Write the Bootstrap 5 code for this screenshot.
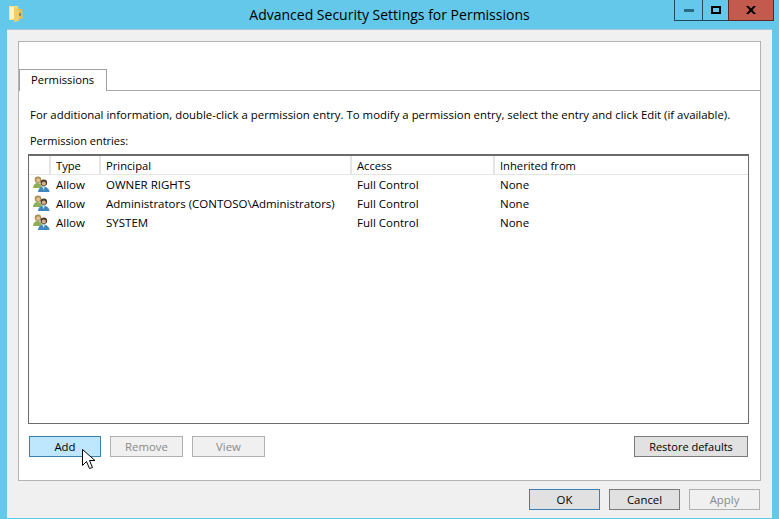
<!DOCTYPE html>
<html lang="en"><head><meta charset="utf-8"><title>Advanced Security Settings for Permissions</title>
<link href="https://cdn.jsdelivr.net/npm/bootstrap@5.3.0/dist/css/bootstrap.min.css" rel="stylesheet">
<style>
html,body{margin:0;height:519px;overflow:hidden}
body{background:#63c8ea;font-family:"Open Sans","Noto Sans","Liberation Sans",sans-serif;font-size:11.4px;color:#000;line-height:16px}
.win{width:779px;height:519px;position:relative;display:flex;flex-direction:column}
.cap{height:30px;display:grid;grid-template-columns:1fr auto 1fr;padding-left:5px;padding-right:5px}
.ttl{font-size:14px;line-height:20px;padding-top:5px;font-family:"Open Sans",sans-serif}
.ctl{display:flex;justify-content:flex-end;height:21px}
.cb{border:1px solid #234a5c;border-top:0;border-right:0;display:flex;align-items:center;justify-content:center}
.cb.mi{width:28px}.cb.ma{width:26px}.cb.cl{width:46px;background:#c25a4e;border:1px solid #5c2a26;border-top:0}
.cli{margin:0 7px 1px 7px;height:488px;background:#f0f0f0;padding:11px 11px 8px 11px;box-shadow:0 -1px 0 #a9c9d6}
.pane{height:440px;background:#fff;border:1px solid #b4b4b4;display:flex;flex-direction:column}
.tstrip{margin-top:27px;height:22px;border-bottom:1px solid #a8a8a8;display:flex}
.tabx{width:88px;height:22px;border:1px solid #a0a0a0;border-bottom:0;background:#fff;padding-left:11px;line-height:20px;margin-bottom:-1px;font-size:11.2px}
.bodyp{padding:16px 11px 0 11px;flex:1;display:flex;flex-direction:column}
.ln1{height:16px;white-space:nowrap}
.ln2{height:16px;margin-top:10px;margin-bottom:5px;font-size:11px}
.lst{height:270px;border:1px solid #6b6b6b;border-top:2px solid #6b6b6b;background:#fff;margin-left:-2px;width:721px}
.grid{width:100%;table-layout:fixed;border-collapse:collapse;margin:0}
.grid th{font-weight:400;height:18px;padding:1px 0 0 5px;border-bottom:1px solid #e5e5e5;border-right:2px solid #e5e5e5;white-space:nowrap;line-height:17px;font-size:11.2px}
.grid th:last-child{border-right:0}
.grid td{height:19px;padding:1px 0 0 6px;white-space:nowrap;line-height:18px;font-size:11.5px}
.grid td.ic{padding:1px 0 0 4px;line-height:0;vertical-align:top}
.btns{display:flex;margin-top:12px;margin-left:-1px;gap:9px;width:719px}
.wb{height:21px;font-size:11.4px;line-height:17px;padding:0;border:1px solid #7a7a7a;background:#e1e1e1;color:#000;border-radius:0;text-align:center;font-family:inherit}
.wb.w72{width:73px}.wb.w71{width:71px}.wb.nar{width:72px}
.wb.off{color:#8a8a8a;background:#f0f0f0;border-color:#b0b0b0}
.wb.hot{background:#bee6fd;border-color:#3c7fb1}
.wb.def{border-color:#3c7fb1}
.wb.rs{width:114px;margin-left:auto;font-size:11px}
.foot{display:flex;justify-content:flex-end;gap:9px;margin-top:8px;padding-right:1px}
.cur{position:absolute;left:82px;top:449px;width:14px;height:22px}
</style></head><body>
<div class="win">
 <div class="cap">
  <div class="ps-1"><svg width="14" height="16" viewBox="0 0 14 16" style="margin-top:6px" aria-hidden="true"><path d="M0 0h9v14H0z" fill="#f6e08e"/><path d="M1 1h4v12H1z" fill="#fdf3c0"/><path d="M5 1l5 1v13l-5 1z" fill="#ecd070"/><path d="M10 3h3.500v10H10z" fill="#e2bd58"/><path d="M10 7h2v3h-2z" fill="#7f8a7a"/></svg></div>
  <div class="ttl text-center">Advanced Security Settings for Permissions</div>
  <div class="ctl">
   <div class="cb mi"><svg width="10" height="3" aria-hidden="true"><rect width="10" height="3" fill="#2b6a85"/></svg></div>
   <div class="cb ma"><svg width="10" height="8" aria-hidden="true"><rect x="1" y="1" width="8" height="6" fill="none" stroke="#000" stroke-width="2"/></svg></div>
   <div class="cb cl"><svg width="10" height="8" viewBox="0 0 10 8" aria-hidden="true"><path d="M0 0h2.500L5 2.500 7.500 0H10L6.500 4 10 8H7.500L5 5.500 2.500 8H0L3.500 4z" fill="#000"/></svg></div>
  </div>
 </div>
 <div class="cli">
  <div class="pane">
   <div class="tstrip"><div class="tabx">Permissions</div></div>
   <div class="bodyp">
    <div class="ln1">For additional information, double-click a permission entry. To modify a permission entry, select the entry and click Edit (if available).</div>
    <div class="ln2">Permission entries:</div>
    <div class="lst">
     <table class="grid">
      <colgroup><col style="width:21px"><col style="width:50px"><col style="width:251px"><col style="width:143px"><col></colgroup>
      <thead><tr><th></th><th>Type</th><th>Principal</th><th>Access</th><th>Inherited from</th></tr></thead>
      <tbody>
       <tr><td class="ic"><svg width="17" height="16" viewBox="0 0 17 16" aria-hidden="true"><use href="#ug"/></svg></td><td>Allow</td><td>OWNER RIGHTS</td><td>Full Control</td><td>None</td></tr>
       <tr><td class="ic"><svg width="17" height="16" viewBox="0 0 17 16" aria-hidden="true"><use href="#ug"/></svg></td><td>Allow</td><td>Administrators (CONTOSO\Administrators)</td><td>Full Control</td><td>None</td></tr>
       <tr><td class="ic"><svg width="17" height="16" viewBox="0 0 17 16" aria-hidden="true"><use href="#ug"/></svg></td><td>Allow</td><td>SYSTEM</td><td>Full Control</td><td>None</td></tr>
      </tbody>
     </table>
    </div>
    <div class="btns">
     <button class="wb nar hot" type="button">Add</button>
     <button class="wb w72 off" type="button">Remove</button>
     <button class="wb w72 off" type="button">View</button>
     <button class="wb rs" type="button">Restore defaults</button>
    </div>
   </div>
  </div>
  <div class="foot">
   <button class="wb w71 def" type="button">OK</button>
   <button class="wb w71" type="button">Cancel</button>
   <button class="wb w71 off" type="button">Apply</button>
  </div>
 </div>
 <svg class="cur" viewBox="0 0 14 22" aria-hidden="true"><path d="M.5.5v16l4-4 3 7 3-1-3-7h5.500z" fill="#fff" stroke="#000" stroke-width="1"/></svg>
</div>
<svg width="0" height="0" style="position:absolute" aria-hidden="true"><defs><g id="ug">
 <path d="M0 12c0-3 2-5 4.500-5S9 9 9 12z" fill="#8fae55"/><circle cx="5" cy="3.800" r="3.300" fill="#a88f4e"/><circle cx="5.200" cy="4.300" r="2" fill="#e3bd95"/>
 <path d="M5 16c0-3 2.500-5.500 5.500-5.500S16.500 13 16.500 16z" fill="#3f87bd"/><path d="M9.300 11h2.500l-1.200 3z" fill="#d5e8f5"/><circle cx="10.800" cy="6.800" r="3.300" fill="#4a3a2a"/><circle cx="10.800" cy="7.500" r="2.100" fill="#d6ae88"/>
</g></defs></svg>
</body></html>
